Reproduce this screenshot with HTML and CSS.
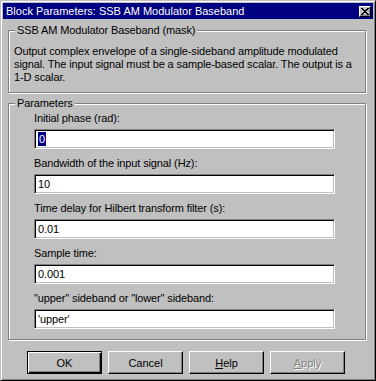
FILE: index.html
```html
<!DOCTYPE html>
<html>
<head>
    <title>Block Parameters: SSB AM Modulator Baseband</title>
    <link rel="stylesheet" href="styles.css">
</head>
<body>

<div class="window">
    <div class="titlebar">
        <span class="title">Block Parameters: SSB AM Modulator Baseband</span>
        <span class="close-btn">
            <svg width="8" height="7" viewBox="0 0 8 7">
                <path d="M0 0h2v1h1v1h2v-1h1v-1h2v1h-1v1h-1v1h-1v1h1v1h1v1h1v1h-2v-1h-1v-1h-2v1h-1v1h-2v-1h1v-1h1v-1h1v-1h-1v-1h-1v-1h-1z" fill="#000"/>
            </svg>
        </span>
    </div>

    <!-- Mask description -->
    <div class="group group-mask">
        <span class="legend">SSB AM Modulator Baseband (mask)</span>
        <p class="desc">
            Output complex envelope of a single-sideband amplitude modulated<br>
            signal. The input signal must be a sample-based scalar. The output is a<br>
            1-D scalar.
        </p>
    </div>

    <!-- Parameters -->
    <div class="group group-params">
        <span class="legend">Parameters</span>
        <div class="param">
            <label>Initial phase (rad):</label>
            <div class="edit"><span class="selected">0</span></div>
        </div>
        <div class="param">
            <label>Bandwidth of the input signal (Hz):</label>
            <div class="edit">10</div>
        </div>
        <div class="param">
            <label>Time delay for Hilbert transform filter (s):</label>
            <div class="edit">0.01</div>
        </div>
        <div class="param">
            <label>Sample time:</label>
            <div class="edit">0.001</div>
        </div>
        <div class="param">
            <label>"upper" sideband or "lower" sideband:</label>
            <div class="edit">'upper'</div>
        </div>
    </div>

    <div class="buttons">
        <button class="btn btn-default">OK</button>
        <button class="btn">Cancel</button>
        <button class="btn"><u>H</u>elp</button>
        <button class="btn btn-disabled"><u>A</u>pply</button>
    </div>
</div>

</body>
</html>
```

FILE: styles.css
```css
/* Classic dialog look */
body {
    margin: 0;
    padding: 0;
    font-family: "Liberation Sans", Arial, sans-serif;
    font-size: 11px;
    letter-spacing: -0.12px;
    color: #000;
    background: #c0c0c0;
}

.window {
    width: 376px;
    height: 381px;
    box-sizing: border-box;
    padding: 1px;
    background: #c0c0c0;
    border: 1px solid;
    border-color: #c0c0c0 #000 #000 #c0c0c0;
    box-shadow: inset 1px 1px 0 #fff, inset -1px -1px 0 #808080;
}

/* Title bar */
.titlebar {
    height: 16px;
    margin: 1px 1px 0 1px;
    background: #000080;
    color: #fff;
    display: flex;
    align-items: center;
    justify-content: space-between;
    padding: 0 2px 0 3px;
}

.title {
    line-height: 16px;
    letter-spacing: 0;
}

.close-btn {
    width: 12px;
    height: 11px;
    box-sizing: border-box;
    background: #c0c0c0;
    border: 1px solid;
    border-color: #fff #000 #000 #fff;
    box-shadow: inset -1px -1px 0 #808080;
    display: flex;
    align-items: center;
    justify-content: center;
}

.close-btn svg {
    display: block;
}

/* Etched group boxes */
.group {
    position: relative;
    width: 358px;
    box-sizing: border-box;
    margin-left: 6px;
    border: 1px solid #808080;
    box-shadow: inset 1px 1px 0 #fff, 1px 1px 0 #fff;
}

.legend {
    position: absolute;
    top: -7px;
    left: 6px;
    padding: 0 2px 0 2px;
    background: #c0c0c0;
    line-height: 13px;
}

.group-mask {
    height: 63px;
    margin-top: 11px;
    padding: 14px 5px 0 5px;
}

.desc {
    margin: 0;
    line-height: 13px;
    white-space: nowrap;
}

.group-params {
    height: 237px;
    margin-top: 10px;
    padding: 8px 0 0 25px;
}

.param {
    margin-bottom: 8px;
}

.param label {
    display: block;
    line-height: 13px;
    margin-bottom: 4px;
}

/* Sunken edit fields */
.edit {
    width: 301px;
    height: 20px;
    box-sizing: border-box;
    background: #fff;
    border: 1px solid;
    border-color: #808080 #fff #fff #808080;
    box-shadow: inset 1px 1px 0 #000, inset -1px -1px 0 #c0c0c0;
    padding: 0 3px;
    line-height: 18px;
    white-space: nowrap;
}

.edit .selected {
    background: #000080;
    color: #fff;
    padding: 1px 1px;
}

/* Push buttons */
.buttons {
    display: flex;
    gap: 6px;
    margin: 11px 0 0 25px;
}

.btn {
    width: 75px;
    height: 23px;
    box-sizing: border-box;
    padding: 0;
    font-family: "Liberation Sans", Arial, sans-serif;
    font-size: 11px;
    color: #000;
    background: #c0c0c0;
    border: 1px solid;
    border-color: #fff #000 #000 #fff;
    box-shadow: inset -1px -1px 0 #808080;
}

.btn-default {
    border-color: #000;
    box-shadow: inset 1px 1px 0 #fff, inset -1px -1px 0 #000, inset -2px -2px 0 #808080;
}

.btn-disabled {
    color: #808080;
    text-shadow: 1px 1px 0 #fff;
}
```
